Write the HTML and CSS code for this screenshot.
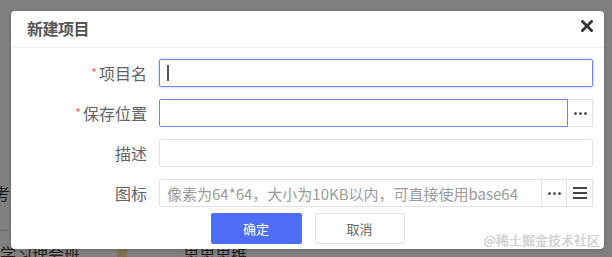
FILE: index.html
```html
<!DOCTYPE html>
<html lang="zh-CN">
<head>
<meta charset="utf-8">
<title>新建项目</title>
<link rel="stylesheet" href="styles.css">
</head>
<body>
<div class="page">
  <div class="bg-row bg-r1"><span class="bg-text">考</span></div>
  <div class="bg-line"></div>
  <div class="bg-row bg-r2">
    <span class="bg-text">学习理会班...</span>
    <span class="bg-mark"></span>
    <span class="bg-text bg-t2">思思思维</span>
  </div>
</div>

<div class="dialog">
  <div class="dialog-header">
    <span class="dialog-title">新建项目</span>
    <span class="dialog-close">
      <svg width="12" height="12" viewBox="0 0 12 12"><path d="M1.5 1.5 L10.5 10.5 M10.5 1.5 L1.5 10.5" stroke="#333" stroke-width="2.8" stroke-linecap="square"/></svg>
    </span>
  </div>
  <div class="dialog-body">
    <div class="form">
      <label class="label"><span class="req">*</span>项目名</label>
      <div class="field focus"><span class="caret"></span></div>

      <label class="label"><span class="req">*</span>保存位置</label>
      <div class="group">
        <div class="field active"></div>
        <div class="addon"><span class="dots"><i></i><i></i><i></i></span></div>
      </div>

      <label class="label">描述</label>
      <div class="field"></div>

      <label class="label">图标</label>
      <div class="group">
        <div class="field"><span class="placeholder">像素为64*64，大小为10KB以内，可直接使用base64</span></div>
        <div class="addon"><span class="dots"><i></i><i></i><i></i></span></div>
        <div class="addon wide"><span class="bars"><i></i><i></i><i></i></span></div>
      </div>
    </div>
    <div class="footer">
      <button class="btn primary">确定</button>
      <button class="btn">取消</button>
    </div>
  </div>
  <div class="watermark">@稀土掘金技术社区</div>
</div>
</body>
</html>
```

FILE: styles.css
```css
* { box-sizing: border-box; }
html, body { margin: 0; padding: 0; }
body {
  width: 612px;
  height: 257px;
  overflow: hidden;
  background: #808080;
  font-family: "Noto Sans CJK SC", "Noto Sans", sans-serif;
  position: relative;
}
.page {
  padding-top: 180px;
  color: #1e1e1e;
}
.bg-row { display: flex; align-items: center; }
.bg-r1 { height: 26px; margin-left: -6px; }
.bg-text { font-size: 16px; line-height: 20px; }
.bg-line { height: 1px; width: 12px; background: #6e6e6e; margin-top: 24px; }
.bg-r2 { margin-top: 12px; height: 20px; }
.bg-mark { width: 10px; height: 20px; background: #7a7350; margin-left: 24px; }
.bg-t2 { margin-left: 56px; }

.dialog {
  position: absolute;
  left: 11px;
  top: 11px;
  width: 593px;
  height: 238px;
  background: #fff;
  border-radius: 4px;
  box-shadow: 0 1px 4px rgba(0,0,0,0.2);
}
.dialog-header {
  height: 37px;
  border-bottom: 1px solid #f0f0f0;
  display: flex;
  align-items: center;
  justify-content: space-between;
  padding: 0 11px 2px 16px;
}
.dialog-title {
  font-size: 16px;
  font-weight: 700;
  color: #555;
  letter-spacing: -0.5px;
}
.dialog-close { display: flex; margin-top: -4px; }
.dialog-body { padding: 11px 11px 0 0; }
.form {
  display: grid;
  grid-template-columns: 136px 1fr;
  grid-auto-rows: 28px;
  column-gap: 12px;
  row-gap: 12px;
}
.label {
  display: flex;
  align-items: center;
  justify-content: flex-end;
  font-size: 16px;
  color: #606266;
}
.req { color: #f56c6c; font-size: 13px; margin-right: 2px; margin-top: -2px; }
.field {
  flex: 1;
  height: 28px;
  border: 1px solid #e2e2e2;
  border-radius: 2px;
  display: flex;
  align-items: center;
  padding-left: 7px;
}
.field.focus {
  border-color: #6f84ee;
  box-shadow: 0 0 2px 1px rgba(111,132,238,0.25);
}
.field.active { border-color: #7286ea; }
.caret { width: 2px; height: 16px; background: #555; }
.placeholder { font-size: 15px; color: #9a9a9a; white-space: nowrap; }
.group { display: flex; }
.group .field { border-radius: 2px 0 0 2px; }
.addon {
  width: 24px;
  height: 28px;
  border: 1px solid #e2e2e2;
  border-left: none;
  display: flex;
  align-items: center;
  justify-content: center;
}
.group .field + .addon { width: 25px; }
.addon.wide { width: 26px; }
.dots { display: flex; gap: 2px; }
.dots i { width: 3px; height: 3px; border-radius: 50%; background: #555; display: block; }
.bars { display: flex; flex-direction: column; gap: 3px; }
.bars i { width: 14px; height: 2px; background: #444; display: block; }
.footer {
  display: flex;
  justify-content: center;
  gap: 13px;
  margin-top: 6px;
  padding-left: 11px;
}
.btn {
  width: 90px;
  height: 31px;
  border: 1px solid #e0e0e0;
  background: #fff;
  font-family: inherit;
  font-size: 13px;
  color: #666;
  border-radius: 2px;
  padding: 0;
}
.btn.primary {
  width: 91px;
  background: #4f6ef7;
  border-color: #4f6ef7;
  color: #fff;
}
.watermark {
  position: absolute;
  right: 4px;
  bottom: 0px;
  font-size: 13px;
  color: #d4d4d4;
  text-shadow: 0 0 1px rgba(0,0,0,0.25);
  line-height: 18px;
}
```
